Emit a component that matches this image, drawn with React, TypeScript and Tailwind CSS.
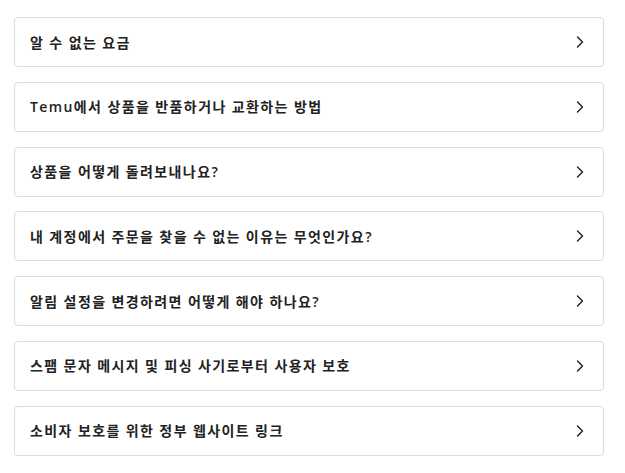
import { ChevronRight } from 'lucide-react';

const items = [
    '알 수 없는 요금',
    'Temu에서 상품을 반품하거나 교환하는 방법',
    '상품을 어떻게 돌려보내나요?',
    '내 계정에서 주문을 찾을 수 없는 이유는 무엇인가요?',
    '알림 설정을 변경하려면 어떻게 해야 하나요?',
    '스팸 문자 메시지 및 피싱 사기로부터 사용자 보호',
    '소비자 보호를 위한 정부 웹사이트 링크',
];

export default function App() {
    return (
        <div className="min-h-screen bg-white pl-[14px] pt-[17px] font-['Open_Sans','Noto_Sans_CJK_KR',sans-serif]">
            <div className="flex w-[590px] flex-col gap-[14.8px]">
                {items.map((item) => (
                    <div
                        key={item}
                        className="flex h-[50px] items-center justify-between rounded-[4px] border border-[#dcdcdc] pl-[15px] pr-[13px]"
                    >
                        <span className="text-[14px] font-semibold tracking-[1.4px] text-[#222]">{item}</span>
                        <ChevronRight className="h-5 w-5 text-[#222]" strokeWidth={1.7} />
                    </div>
                ))}
            </div>
        </div>
    );
}
